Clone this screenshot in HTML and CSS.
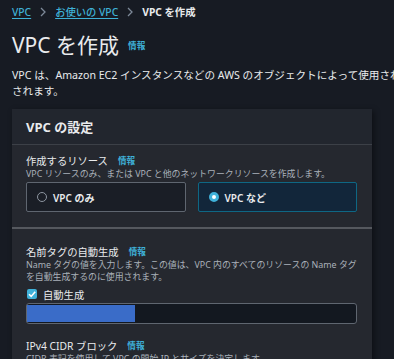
FILE: index.html
```html
<!DOCTYPE html>
<html lang="ja">
<head>
<meta charset="utf-8">
<link rel="stylesheet" href="styles.css">
</head>
<body>
<nav class="crumbs">
  <a class="crumb-link">VPC</a>
  <svg class="chev" width="6" height="10" viewBox="0 0 6 10"><path d="M1 1 L5 5 L1 9" fill="none" stroke="#7d8998" stroke-width="1.3"/></svg>
  <a class="crumb-link">お使いの VPC</a>
  <svg class="chev" width="6" height="10" viewBox="0 0 6 10"><path d="M1 1 L5 5 L1 9" fill="none" stroke="#7d8998" stroke-width="1.3"/></svg>
  <span class="crumb-current">VPC を作成</span>
</nav>
<h1 class="title">VPC を作成<span class="info info-title">情報</span></h1>
<p class="page-desc">VPC は、Amazon EC2 インスタンスなどの AWS のオブジェクトによって使用され<br>されます。</p>

<section class="card">
  <header class="card-head">VPC の設定</header>
  <div class="field first">
    <div class="label">作成するリソース<span class="info">情報</span></div>
    <div class="desc">VPC リソースのみ、または VPC と他のネットワークリソースを作成します。</div>
    <div class="tiles">
      <div class="tile"><span class="radio"></span>VPC のみ</div>
      <div class="tile selected"><span class="radio on"></span>VPC など</div>
    </div>
  </div>
  <div class="divider"></div>
  <div class="field">
    <div class="label">名前タグの自動生成<span class="info">情報</span></div>
    <div class="desc">Name タグの値を入力します。この値は、VPC 内のすべてのリソースの Name タグを自動生成するのに使用されます。</div>
    <div class="check-row"><span class="checkbox"><svg width="10" height="10" viewBox="0 0 10 10"><path d="M2 5.2 L4.2 7.4 L8.2 2.8" fill="none" stroke="#fff" stroke-width="1.6"/></svg></span>自動生成</div>
    <div class="input"><span class="sel"></span></div>
    <div class="label label-3">IPv4 CIDR ブロック<span class="info">情報</span></div>
    <div class="desc">CIDR 表記を使用して VPC の開始 IP とサイズを決定します。</div>
  </div>
</section>
</body>
</html>
```
FILE: styles.css
```css
html, body {
  margin: 0;
  padding: 0;
  background: #171b23;
  overflow: hidden;
}
body {
  width: 394px;
  height: 359px;
  padding-left: 12px;
  box-sizing: border-box;
  font-family: "Noto Sans", "Noto Sans CJK JP", sans-serif;
  color: #e9ebed;
}
.crumbs {
  display: flex;
  align-items: center;
  height: 24px;
  font-size: 10.3px;
  line-height: 14px;
}
.crumb-link {
  color: #3fb1d6;
  text-decoration: underline;
  text-underline-offset: 2px;
  font-weight: 500;
}
.chev {
  margin: 0 9px;
}
.crumb-current {
  font-weight: 700;
  color: #e9ebed;
}
.title {
  margin: 6px 0 0;
  font-size: 21px;
  line-height: 28px;
  font-weight: 400;
  display: flex;
  align-items: center;
}
.info {
  color: #3fb1d9;
  font-size: 8.6px;
  font-weight: 700;
  margin-left: 10px;
}
.info-title {
  margin-left: 9px;
  margin-top: 2px;
}
.page-desc {
  margin: 7px 0 0;
  font-size: 10.6px;
  line-height: 16px;
  color: #e9ebed;
  white-space: nowrap;
}
.card {
  margin-top: 10px;
  width: 360px;
  background: #25282f;
  box-shadow: 2px 2px 6px rgba(0, 0, 0, 0.45);
}
.card-head {
  height: 35px;
  display: flex;
  align-items: center;
  padding: 0 14px;
  background: #22262e;
  border-bottom: 1px solid #3c4047;
  font-size: 13px;
  font-weight: 700;
}
.field {
  padding: 16px 15px 0 14px;
}
.field.first {
  padding-top: 9px;
  padding-bottom: 15px;
}
.label {
  font-size: 10.3px;
  line-height: 14px;
  display: flex;
  align-items: center;
}
.label-3 {
  margin-top: 15px;
}
.desc {
  font-size: 8.9px;
  line-height: 12px;
  color: #aab1ba;
}
.tiles {
  margin-top: 2px;
  display: grid;
  grid-template-columns: 1fr 1fr;
  gap: 12px;
}
.tile {
  height: 30px;
  box-sizing: border-box;
  border: 1px solid #5f6670;
  border-radius: 2px;
  background: #1a1e26;
  display: flex;
  align-items: center;
  padding-left: 10px;
  font-size: 10px;
  font-weight: 600;
}
.tile.selected {
  background: #12263a;
  border-color: #0e6784;
}
.radio {
  width: 10px;
  height: 10px;
  box-sizing: border-box;
  border: 1.3px solid #8d95a0;
  border-radius: 50%;
  margin-right: 6px;
}
.radio.on {
  border: 3.2px solid #3fb1d9;
  background: #ffffff;
}
.divider {
  height: 2px;
  background: #55585e;
}
.check-row {
  margin-top: 3px;
  height: 16px;
  display: flex;
  align-items: center;
  font-size: 10.3px;
}
.checkbox {
  width: 10px;
  height: 10px;
  border-radius: 2px;
  background: #3fb1d9;
  margin: 0 6px 0 1px;
  display: flex;
}
.input {
  margin-top: 1px;
  height: 21px;
  box-sizing: border-box;
  border: 1px solid #5f6670;
  border-radius: 3px;
  background: #131820;
  padding: 1px 0 1px 0;
  display: flex;
}
.sel {
  width: 108px;
  background: #3a6cc8;
}
```
